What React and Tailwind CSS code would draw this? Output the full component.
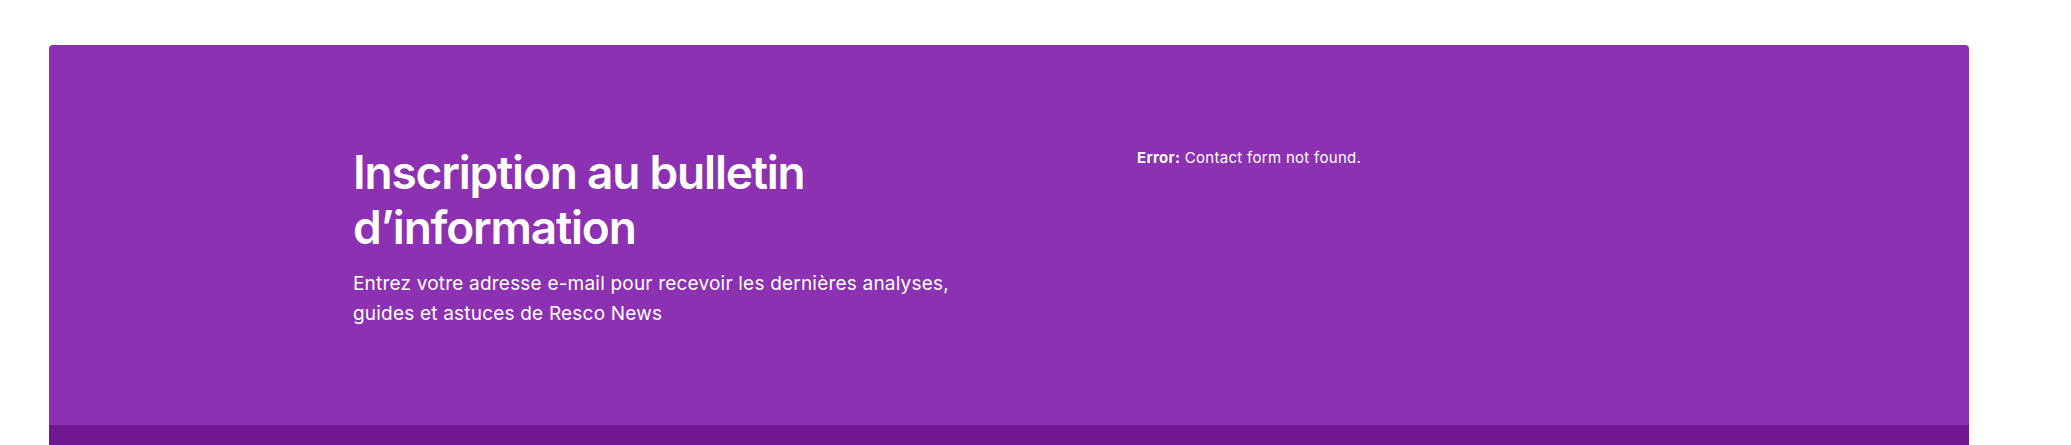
export default function App() {
  return (
    <div className="h-[445px] overflow-hidden bg-white pt-[45px] pl-[49px]" style={{ fontFamily: 'Inter, "Noto Sans", sans-serif' }}>
      <div className="w-[1920px] rounded-t-[4px] overflow-hidden">
        <div className="h-[380px] bg-[#8b31b1] flex pl-[304px] pt-[100px]">
          {/* newsletter text */}
          <div className="w-[784px] text-white">
            <h2 className="text-[46px] leading-[55px] font-semibold tracking-[-1.2px] w-[520px]">
              Inscription au bulletin d’information
            </h2>
            <p className="mt-[14px] text-[19px] leading-[30px] tracking-[0.2px] w-[610px]">
              Entrez votre adresse e-mail pour recevoir les dernières analyses, guides et astuces de Resco News
            </p>
          </div>
          <div className="text-white text-[15px] tracking-[0.3px] leading-[24px] mt-[1px]">
            <strong className="font-bold">Error:</strong> Contact form not found.
          </div>
        </div>
        <div className="h-[40px] bg-[#70188f]"></div>
      </div>
    </div>
  );
}
